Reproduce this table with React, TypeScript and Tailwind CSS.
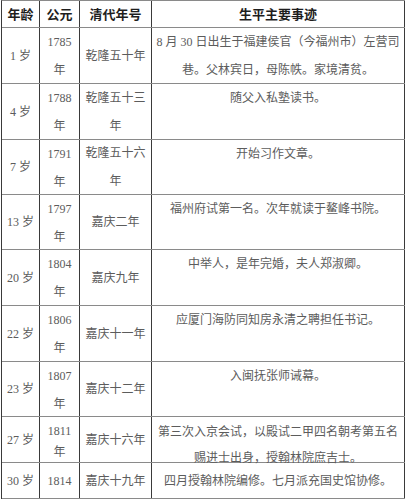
const rows = [
  { age: '1 岁', year: ['1785', '年'], era: ['乾隆五十年'], event: ['8 月 30 日出生于福建侯官（今福州市）左营司', '巷。父林宾日，母陈帙。家境清贫。'], h: 'h-[56px]', kind: 'tall' },
  { age: '4 岁', year: ['1788', '年'], era: ['乾隆五十三', '年'], event: ['随父入私塾读书。'], h: 'h-[56px]', kind: 'tall' },
  { age: '7 岁', year: ['1791', '年'], era: ['乾隆五十六', '年'], event: ['开始习作文章。'], h: 'h-[55px]', kind: 'tall' },
  { age: '13 岁', year: ['1797', '年'], era: ['嘉庆二年'], event: ['福州府试第一名。次年就读于鳌峰书院。'], h: 'h-[55px]', kind: 'tall' },
  { age: '20 岁', year: ['1804', '年'], era: ['嘉庆九年'], event: ['中举人，是年完婚，夫人郑淑卿。'], h: 'h-[56px]', kind: 'tall' },
  { age: '22 岁', year: ['1806', '年'], era: ['嘉庆十一年'], event: ['应厦门海防同知房永清之聘担任书记。'], h: 'h-[56px]', kind: 'tall' },
  { age: '23 岁', year: ['1807', '年'], era: ['嘉庆十二年'], event: ['入闽抚张师诫幕。'], h: 'h-[55px]', kind: 'tall' },
  { age: '27 岁', year: ['1811', '年'], era: ['嘉庆十六年'], event: ['第三次入京会试，以殿试二甲四名朝考第五名', '赐进士出身，授翰林院庶吉士。'], h: 'h-[46px]', kind: 'mid' },
  { age: '30 岁', year: ['1814'], era: ['嘉庆十九年'], event: ['四月授翰林院编修。七月派充国史馆协修。'], h: 'h-[36px]', kind: 'short' },
]

function Lines({ lines }: { lines: string[] }) {
  return (
    <>
      {lines.map((l, i) => (
        <div key={i} className="whitespace-nowrap">{l}</div>
      ))}
    </>
  )
}

export default function App() {
  return (
    <div className="w-[406px] h-[500px] bg-white font-['Liberation_Serif','Noto_Sans_CJK_SC',serif] text-[12px] text-[#5c5c5c]">
      <div className="ml-px w-[404px] border-l border-t border-l-[#3a3a3a] border-t-[#8a8a8a]">
        {/* header */}
        <div className="flex h-[27px] border-b border-[#8a8a8a] font-bold text-[13px] text-[#1e1e1e] font-['Noto_Sans_CJK_SC',sans-serif]">
          <div className="w-[38px] border-r border-[#3a3a3a] flex items-center justify-center">年龄</div>
          <div className="w-[40px] border-r border-[#3a3a3a] flex items-center justify-center">公元</div>
          <div className="w-[72px] border-r border-[#3a3a3a] flex items-center justify-center">清代年号</div>
          <div className="w-[253px] border-r border-[#3a3a3a] flex items-center justify-center">生平主要事迹</div>
        </div>

        {rows.map((r) => (
          <div key={r.age} className={`flex border-b border-[#8a8a8a] ${r.h}`}>
            <div className="w-[38px] border-r border-[#3a3a3a] flex items-center justify-center whitespace-nowrap">
              {r.age}
            </div>
            <div
              className={
                r.kind === 'tall'
                  ? 'w-[40px] border-r border-[#3a3a3a] text-center leading-[28px]'
                  : r.kind === 'mid'
                  ? 'w-[40px] border-r border-[#3a3a3a] text-center pt-[4px] leading-[21px]'
                  : 'w-[40px] border-r border-[#3a3a3a] flex items-center justify-center'
              }
            >
              <Lines lines={r.year} />
            </div>
            <div className="w-[72px] border-r border-[#3a3a3a] flex flex-col items-center justify-center leading-[28px]">
              <Lines lines={r.era} />
            </div>
            <div
              className={
                r.kind === 'tall'
                  ? 'w-[253px] border-r border-[#3a3a3a] text-center leading-[28px]'
                  : r.kind === 'mid'
                  ? 'w-[253px] border-r border-[#3a3a3a] text-center pt-[2px] leading-[26px]'
                  : 'w-[253px] border-r border-[#3a3a3a] flex items-center justify-center'
              }
            >
              <Lines lines={r.event} />
            </div>
          </div>
        ))}
      </div>
    </div>
  )
}
